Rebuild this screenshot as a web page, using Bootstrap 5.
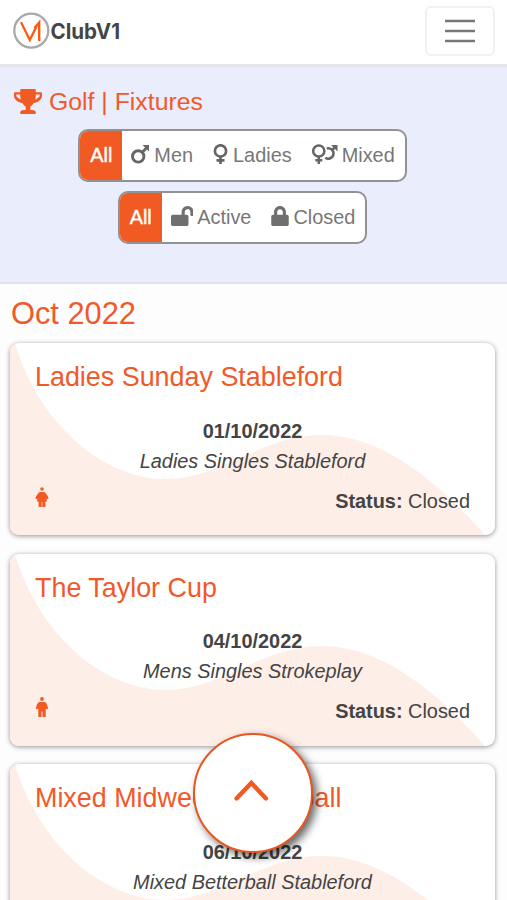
<!DOCTYPE html>
<html lang="en">
<head>
<meta charset="utf-8">
<meta name="viewport" content="width=device-width, initial-scale=1">
<title>ClubV1 - Golf Fixtures</title>
<link href="https://cdn.jsdelivr.net/npm/bootstrap@5.3.0/dist/css/bootstrap.min.css" rel="stylesheet">
<style>
:root { --club-orange: #f1592a; --club-orange-fill: #f15a22; --club-grey: #777; }
body { font-family: "Liberation Sans", Arial, sans-serif; font-size: 19.9px; line-height: 30px; color: #444; background: #fdfdfe; height: 900px; }
.club-nav { height: 67px; border-bottom: 3px solid #e4e5ea; padding: 0 12px 2px; }
.menu-toggle { width: 70px; height: 50px; border: 2px solid #f1f1f1; border-radius: 6px; padding: 0; margin-top: -1px; }
.filter-panel { height: 217px; background: #e9edfc; border-bottom: 2px solid #dfe1ea; padding: 20px 36px 0 14px; }
.page-title { font-size: 24.8px; line-height: 30px; font-weight: 400; color: var(--club-orange); gap: 7px; }
.page-title svg { margin-top: -2px; }
.filter-sets { padding-top: 12px; gap: 9px; }
.filter-set { height: 53px; border: 2px solid #929295; border-radius: 10px; background: #fff; overflow: hidden; }
.filter-set .btn { border: 0; border-radius: 0; padding: 0 10px 2px; font-size: 19.9px; line-height: 46px; color: var(--club-grey); display: flex; align-items: center; }
.filter-set .btn + .btn { padding-left: 9px; }
.filter-set .btn:last-child { padding-left: 10px; padding-right: 10px; }
.filter-set svg { margin-top: -1px; }
.filter-set .btn.active { background: var(--club-orange-fill); color: #fff; -webkit-text-stroke: .4px #fff; }
.fixture-list { height: 616px; padding: 0 12px 0 10px; overflow: hidden; }
.month-title { font-size: 30.8px; line-height: 38px; font-weight: 400; color: var(--club-orange); margin: 0; padding: 11px 0 10px 1px; }
.fixture { height: 192px; border: 0; border-radius: 9px; margin-bottom: 18.6px; overflow: hidden; box-shadow: 0 1px 5px rgba(0,0,0,.42); padding: 18px 25px 0; background: #fff; color: #444; }
.wave { position: absolute; inset: 0; width: 100%; height: 100%; }
.fixture-body { position: relative; }
.fixture-title { font-size: 26.9px; line-height: 32px; font-weight: 400; color: var(--club-orange); margin-bottom: 22.5px; }
.status-row { margin-top: 10px; }
.status-row svg { margin-top: 1px; }
.scroll-top { width: 120px; height: 120px; left: 193px; top: 733px; border: 2.5px solid #e9561f; background: #fff; box-shadow: 4px 4px 9px rgba(0,0,0,.6); padding: 0 3px 5px 0; }
</style>
<script src="https://cdn.jsdelivr.net/npm/bootstrap@5.3.0/dist/js/bootstrap.bundle.min.js"></script>
</head>
<body class="overflow-hidden">
<svg class="d-none" aria-hidden="true">
  <symbol id="wave-shape" viewBox="0 0 485 192" preserveAspectRatio="none">
    <path fill="#feeee8" d="M0 0H5C30 85 97 136 155 136C212 136 252 92 312 92C370 92 425 135 475 192H0Z"/>
  </symbol>
  <symbol id="woman" viewBox="0 0 14 20">
    <circle cx="7" cy="2" r="1.8"/>
    <path d="M5 5h4c1.600 0 4.500 5 4.500 6.200 0 .8-1.300 1-2 .2l.6 3.200H10.400V20H7.300v-5h-.6v5H3.600v-5.400H1.900l.6-3.200c-.7.800-2 .6-2-.2C.5 10 3.400 5 5 5z"/>
  </symbol>
  <symbol id="man" viewBox="0 0 14 20">
    <circle cx="7" cy="2" r="1.900"/>
    <path d="M4.500 5h5c2 0 3.500 4.800 3.500 6.500 0 1-1.700 1-2.300 0V20H7.500v-5.500h-1V20H3.300v-8.500c-.6 1-2.300 1-2.300 0C1 9.800 2.500 5 4.500 5z"/>
  </symbol>
</svg>

<nav class="club-nav bg-white d-flex align-items-center justify-content-between">
  <a href="#" aria-label="ClubV1">
    <svg class="d-block" width="112" height="40" viewBox="0 0 112 40">
      <circle cx="19.300" cy="19.600" r="17" fill="#fff" stroke="#a9a9ab" stroke-width="2.300"/>
      <path d="M9 11.300L17.800 29L24.500 15.500" fill="none" stroke="#fa5b0f" stroke-width="2.300"/>
      <path d="M27.200 30V11.500L22.500 17" fill="none" stroke="#fa5b0f" stroke-width="2.400"/>
      <text x="38.500" y="27.500" font-family="Inter, sans-serif" font-size="21.500" font-weight="700" fill="#454547" textLength="69.500" lengthAdjust="spacingAndGlyphs">ClubV1</text>
    </svg>
  </a>
  <button class="menu-toggle btn bg-white d-flex align-items-center justify-content-center" aria-label="Menu">
    <svg width="30" height="24" viewBox="0 0 30 24"><path d="M0 2h30M0 12h30M0 22h30" stroke="#777" stroke-width="2.600"/></svg>
  </button>
</nav>

<section class="filter-panel">
  <h1 class="page-title d-flex align-items-center mb-0">
    <svg width="28" height="25" viewBox="0 0 576 512" fill="#f15a22"><path d="M552 64H448V24c0-13.300-10.700-24-24-24H152c-13.300 0-24 10.700-24 24v40H24C10.700 64 0 74.700 0 88v56c0 35.700 22.500 72.400 61.900 100.700 31.500 22.700 69.800 37.100 110 41.700C203.300 338.500 240 360 240 360v72h-48c-35.300 0-64 20.700-64 56v12c0 6.600 5.400 12 12 12h296c6.600 0 12-5.400 12-12v-12c0-35.300-28.700-56-64-56h-48v-72s36.700-21.500 68.100-73.600c40.300-4.600 78.600-19 110-41.700 39.300-28.300 61.900-65 61.900-100.700V88c0-13.300-10.700-24-24-24zM99.300 192.800C74.900 175.200 46 155.600 46 144v-30h82.200c1 46.600 5.800 75.200 12.800 100.200-15.100-5.200-29.200-12.400-41.700-21.400zM530 144c0 11.600-35.700 36.100-53.300 48.800-12.500 9-26.700 16.200-41.800 21.400 7-25 11.800-53.600 12.800-100.200H530v30z"/></svg>
    <span>Golf | Fixtures</span>
  </h1>
  <div class="filter-sets d-flex flex-column align-items-center">
    <div class="filter-set d-flex">
      <button class="btn active">All</button>
      <button class="btn"><svg class="me-1" width="19" height="20" viewBox="0 0 19 20" fill="none" stroke="#666" stroke-width="2.900"><circle cx="7.200" cy="12.400" r="5.700"/><path d="M11 8.500L16 3.500"/><path d="M11.500 1H18V7.500Z" fill="#666" stroke="none"/></svg>Men</button>
      <button class="btn"><svg class="me-1" width="17" height="20" viewBox="0 0 17 20" fill="none" stroke="#666" stroke-width="2.700"><circle cx="8.500" cy="6.900" r="5.600"/><path d="M8.500 12v8M4.500 16.300h8"/></svg>Ladies</button>
      <button class="btn"><svg width="26" height="20" viewBox="0 0 26 20" fill="none" stroke="#666" stroke-width="2.500"><circle cx="6.800" cy="7" r="5.600"/><path d="M6.800 12.500v7.500M3.300 16.300h7M14.800 4.500A5.200 5.200 0 1 1 13.300 13.700M20 6.500L23 3"/><path d="M19 1H25.500V7.500Z" fill="#666" stroke="none"/></svg><span class="ms-1">Mixed</span></button>
    </div>
    <div class="filter-set d-flex">
      <button class="btn active">All</button>
      <button class="btn"><svg class="me-1" width="22.500" height="20" viewBox="0 0 576 512" fill="#6f6f6f"><path d="M423.500 0C339.500.3 272 69.500 272 153.500V224H48c-26.500 0-48 21.500-48 48v192c0 26.500 21.500 48 48 48h352c26.500 0 48-21.500 48-48V272c0-26.500-21.500-48-48-48h-48v-71.100c0-39.600 31.700-72.500 71.300-72.900 40-.4 72.700 32.100 72.700 72v80c0 13.300 10.700 24 24 24h32c13.300 0 24-10.700 24-24v-80C576 68 507.500-.3 423.500 0z"/></svg>Active</button>
      <button class="btn"><svg width="18" height="20" viewBox="0 0 448 512" fill="#6f6f6f"><path d="M400 224h-24v-72C376 68.200 307.800 0 224 0S72 68.200 72 152v72H48c-26.500 0-48 21.500-48 48v192c0 26.500 21.500 48 48 48h352c26.500 0 48-21.500 48-48V272c0-26.500-21.500-48-48-48zm-104 0H152v-72c0-39.700 32.300-72 72-72s72 32.300 72 72v72z"/></svg><span class="ms-1">Closed</span></button>
    </div>
  </div>
</section>

<main class="fixture-list">
  <h2 class="month-title">Oct 2022</h2>

  <article class="card fixture">
    <svg class="wave"><use href="#wave-shape"/></svg>
    <div class="fixture-body">
      <h3 class="fixture-title">Ladies Sunday Stableford</h3>
      <div class="text-center fw-bold">01/10/2022</div>
      <div class="text-center fst-italic">Ladies Singles Stableford</div>
      <div class="status-row d-flex justify-content-between">
        <svg width="14" height="20" fill="#f15a22"><use href="#woman"/></svg>
        <div><strong>Status:</strong> Closed</div>
      </div>
    </div>
  </article>

  <article class="card fixture">
    <svg class="wave"><use href="#wave-shape"/></svg>
    <div class="fixture-body">
      <h3 class="fixture-title">The Taylor Cup</h3>
      <div class="text-center fw-bold">04/10/2022</div>
      <div class="text-center fst-italic">Mens Singles Strokeplay</div>
      <div class="status-row d-flex justify-content-between">
        <svg width="14" height="20" fill="#f15a22"><use href="#man"/></svg>
        <div><strong>Status:</strong> Closed</div>
      </div>
    </div>
  </article>

  <article class="card fixture">
    <svg class="wave"><use href="#wave-shape"/></svg>
    <div class="fixture-body">
      <h3 class="fixture-title">Mixed Midweek Betterball</h3>
      <div class="text-center fw-bold">06/10/2022</div>
      <div class="text-center fst-italic">Mixed Betterball Stableford</div>
    </div>
  </article>
</main>

<button class="scroll-top position-fixed rounded-circle d-flex align-items-center justify-content-center" aria-label="Back to top">
  <svg width="38" height="24" viewBox="0 0 38 24" fill="none" stroke="#f15a22" stroke-width="4.400" stroke-linecap="round"><path d="M3.500 19.500L18.300 4L33 19.500"/></svg>
</button>
</body>
</html>
